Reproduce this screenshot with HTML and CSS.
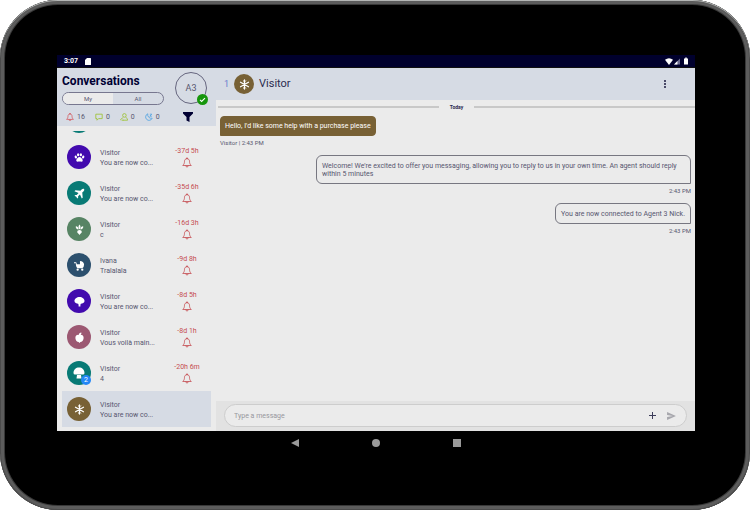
FILE: index.html
```html
<!DOCTYPE html>
<html lang="en">
<head>
<meta charset="utf-8">
<meta name="viewport" content="width=device-width, initial-scale=1">
<title>Conversations</title>
<link rel="stylesheet" href="styles.css">
</head>
<body>
<svg class="defs" aria-hidden="true">
  <symbol id="bell" viewBox="0 0 20 20"><path d="M10 2.200C6.500 2.200 5 5 5 7.500c0 4-1 6-3.500 8.500h17C16 13.500 15 11.500 15 7.500c0-2.500-1.500-5.300-5-5.300zM7.500 16.500a2.500 2.500 0 0 0 5 0M10 .5v1.700" fill="none" stroke="currentColor" stroke-width="1.600" stroke-linejoin="round" stroke-linecap="round"/></symbol>
  <symbol id="flower" viewBox="0 0 24 24"><g stroke="#fff" stroke-width="2.800" stroke-linecap="round" fill="none"><path d="M12 2v20M3.300 7l17.400 10M3.300 17l17.400-10"/><path d="M9.500 4L12 6.500 14.500 4M9.500 20l2.500-2.500 2.500 2.500" stroke-width="2"/></g></symbol>
</svg>
<div class="device">
  <div class="screen">
    <div class="status">
      <span class="clock">3:07</span>
      <svg class="sd" viewBox="0 0 12 14"><path d="M4 0h7q1 0 1 1v12q0 1-1 1H1q-1 0-1-1V4z" fill="#fff"/></svg>
      <span class="grow"></span>
      <svg class="wifi" viewBox="0 0 16 14"><path d="M0 3.500Q8-3 16 3.500L8 14z" fill="#fff"/></svg>
      <svg class="signal" viewBox="0 0 14 14"><path d="M14 0v14H0z" fill="#6c6c91"/><path d="M8 6v8H0z" fill="#fff"/></svg>
      <svg class="battery" viewBox="0 0 8 14"><path d="M2.500 0h3v2H8v12H0V2h2.500z" fill="#fff"/></svg>
    </div>
    <div class="app">
      <aside class="sidebar">
        <header class="side-head">
          <div class="head-main">
            <h1>Conversations</h1>
            <div class="tabs"><button class="on" type="button">My</button><button type="button">All</button></div>
          </div>
          <div class="me">A3
            <svg class="ok" viewBox="0 0 20 20"><circle cx="10" cy="10" r="10" fill="#16960c"/><path d="M5.500 10.500l3 3 6-6" fill="none" stroke="#fff" stroke-width="2"/></svg>
          </div>
          <div class="counts">
            <span class="red"><svg viewBox="0 0 20 20"><use href="#bell"/></svg><b>16</b></span>
            <span class="lime"><svg viewBox="0 0 20 20"><path d="M2 3h16v11H9l-4 4v-4H2z" fill="none" stroke="currentColor" stroke-width="2.200"/></svg><b>0</b></span>
            <span class="lime"><svg viewBox="0 0 20 20"><g fill="none" stroke="currentColor" stroke-width="2.200"><circle cx="11" cy="6" r="4.500"/><path d="M1 18c1-4 4-5 7-6M7 18h12c0-4-2-6-5-7M4 18h5"/></g></svg><b>0</b></span>
            <span class="blue"><svg viewBox="0 0 20 20"><path d="M7 2a8.500 8.500 0 1 0 11 11A9 9 0 0 1 7 2zM12 3h5l-5 5h5" fill="none" stroke="currentColor" stroke-width="2.200"/></svg><b>0</b></span>
          </div>
          <button class="filter" type="button" aria-label="Filter"><svg viewBox="0 0 20 20"><path d="M0 0h20v3l-7 7v10l-6-3v-7L0 3z" fill="#000033"/></svg></button>
        </header>
        <ul class="list">
          <li><span class="avatar teal"></span></li>
          <li><span class="avatar violet"><svg viewBox="0 0 24 24" fill="#fff"><ellipse cx="4" cy="11" rx="2.500" ry="3.300" transform="rotate(-20 4 11)"/><ellipse cx="9" cy="6" rx="2.500" ry="3.500"/><ellipse cx="15" cy="6" rx="2.500" ry="3.500"/><ellipse cx="20" cy="11" rx="2.500" ry="3.300" transform="rotate(20 20 11)"/><path d="M12 11c3 0 7 4.500 7 7.500 0 4-4.500 2-7 2s-7 2-7-2c0-3 4-7.500 7-7.500z"/></svg></span><p>Visitor<br>You are now co...</p><div class="due">-37d 5h<svg><use href="#bell"/></svg></div></li>
          <li><span class="avatar teal"><svg viewBox="0 0 24 24" fill="#fff"><path d="M22 2c-2-1-4 0-6 2l-2 2-11-1-2 2 9 4-4 4H3l-2 2 4 2 2 4 2-2v-3l4-4 4 9 2-2-1-11 2-2c2-2 3-4 2-6z"/></svg></span><p>Visitor<br>You are now co...</p><div class="due">-35d 6h<svg><use href="#bell"/></svg></div></li>
          <li><span class="avatar green"><svg viewBox="0 0 24 24" fill="#fff"><path d="M12 12C9 9 9 4 12 1c3 3 3 8 0 11zM10 12C6 12 3 9 4 5c4 0 6 3 6 7zM14 12c4 0 7-3 6-7-4 0-6 3-6 7z"/><path d="M7 17q0-4 5-4t5 4c0 3-3 4-5 7-2-3-5-4-5-7z"/></svg></span><p>Visitor<br>c</p><div class="due">-16d 3h<svg><use href="#bell"/></svg></div></li>
          <li><span class="avatar navy"><svg viewBox="0 0 24 24" fill="#fff"><path d="M0 5h4q2 0 2 4h7V2c5 0 9 3 9 8q0 6-4 8H8c-3-2-4-6-4-11H0z"/><circle cx="8" cy="21" r="2.500"/><circle cx="18" cy="21" r="2.500"/></svg></span><p>Ivana<br>Tralalala</p><div class="due">-9d 8h<svg><use href="#bell"/></svg></div></li>
          <li><span class="avatar violet"><svg viewBox="0 0 24 24" fill="#fff"><path d="M12 2c6 0 11 4 11 9 0 4-5 6-8 6l-1 2v4h-4v-4l-1-2c-3 0-8-2-8-6 0-5 5-9 11-9z"/></svg></span><p>Visitor<br>You are now co...</p><div class="due">-8d 5h<svg><use href="#bell"/></svg></div></li>
          <li><span class="avatar rose"><svg viewBox="0 0 24 24" fill="#fff"><path d="M12 7c4-2 9 0 9 6 0 5-4 9-7 9l-2 2-2-2c-3 0-7-4-7-9 0-6 5-8 9-6zM11 7C10 3 13 1 16 1c1 4-2 6-5 6z"/></svg></span><p>Visitor<br>Vous voilà main...</p><div class="due">-8d 1h<svg><use href="#bell"/></svg></div></li>
          <li><span class="avatar teal"><svg class="large" viewBox="0 0 24 24" fill="#fff"><path d="M1 12C1 5 6 1 12 1s11 4 11 11q0 3-3 3H4q-3 0-3-3zM8 16h8l1 7H7z"/></svg><em>2</em></span><p>Visitor<br>4</p><div class="due">-20h 6m<svg><use href="#bell"/></svg></div></li>
          <li class="selected"><span class="avatar brown"><svg><use href="#flower"/></svg></span><p>Visitor<br>You are now co...</p></li>
        </ul>
      </aside>
      <main class="chat">
        <header class="chat-head">
          <span class="num">1</span>
          <span class="avatar small brown"><svg><use href="#flower"/></svg></span>
          <h2>Visitor</h2>
          <button class="more" type="button" aria-label="More options"><i></i><i></i><i></i></button>
        </header>
        <section class="log">
          <div class="day">Today</div>
          <div class="msg in">Hello, I'd like some help with a purchase please</div>
          <div class="meta">Visitor | 2:43 PM</div>
          <div class="msg out">Welcome! We're excited to offer you messaging, allowing you to reply to us in your own time. An agent should reply within 5 minutes</div>
          <div class="meta right">2:43 PM</div>
          <div class="msg out">You are now connected to Agent 3 Nick.</div>
          <div class="meta right">2:43 PM</div>
        </section>
        <form class="compose">
          <div class="field">
            <input type="text" placeholder="Type a message" aria-label="Message">
            <button type="button" aria-label="Add"><svg class="plus" viewBox="0 0 14 14"><path d="M7 0v14M0 7h14" stroke="#3c3c5a" stroke-width="2"/></svg></button>
            <button type="button" aria-label="Send"><svg class="send" viewBox="0 0 20 18"><path d="M0 0l20 9L0 18v-7l13-2L0 7z" fill="#a7a7ad"/></svg></button>
          </div>
        </form>
      </main>
    </div>
  </div>
  <nav class="softkeys">
    <button type="button" aria-label="Back"><svg viewBox="0 0 8 8"><path d="M8 0v8L0 4z"/></svg></button>
    <button type="button" aria-label="Home"><svg viewBox="0 0 8 8"><circle cx="4" cy="4" r="4"/></svg></button>
    <button type="button" aria-label="Recent apps"><svg viewBox="0 0 8 8"><path d="M0 0h8v8H0z"/></svg></button>
  </nav>
</div>
</body>
</html>
```
FILE: styles.css
```css
* { box-sizing: border-box; }
body { margin: 0; background: #fff; font-family: Roboto, "Liberation Sans", sans-serif; font-size: 7px; line-height: 10px; color: #56566f; }
button { border: 0; padding: 0; background: none; font: inherit; color: inherit; }
svg { display: block; }
h1, h2, p, ul { margin: 0; padding: 0; }
.defs { position: absolute; width: 0; height: 0; }

.device {
  display: flex;
  flex-direction: column;
  min-height: 100vh;
  padding: 55px 55px 67px 57px;
  border-radius: 58px;
  background: #000;
  box-shadow: inset 0 1px 0 #b4b6b5, inset 0 0 0 1px #4b4b4b, inset 0 0 0 4px #5c5c5c, inset 0 0 0 5px #383838;
}
.screen { flex: 1; display: flex; flex-direction: column; }
.status { display: flex; align-items: center; height: 13px; padding: 0 7px; background: #00002d; border-bottom: 1px solid #111; color: #fff; }
.clock { font-weight: 700; }
.sd { width: 6px; height: 7px; margin-left: 7px; }
.grow { flex: 1; }
.wifi { width: 8px; height: 7px; }
.signal { width: 6px; height: 7px; margin-left: 1px; }
.battery { width: 4px; height: 8px; margin: 0 0 0 4px; }

.app { flex: 1; display: grid; grid-template-columns: 159px 1fr; background: #ebebeb; }
.sidebar { display: flex; flex-direction: column; min-height: 0; }
.side-head {
  display: grid;
  grid-template-columns: 102px 32px;
  justify-content: space-between;
  row-gap: 4px;
  height: 58px;
  padding: 4px 9px 3px 5px;
  background: #d6dbe4;
}
h1 { padding-top: 1px; font-size: 12px; line-height: 16px; color: #000033; }
.tabs { display: flex; height: 13px; margin-top: 3px; border: 1px solid #77778f; border-radius: 7px; overflow: hidden; }
.tabs button { flex: 1; font-size: 6px; line-height: 10px; }
.tabs .on { background: #ebebeb; }
.me { position: relative; width: 32px; height: 32px; border: 1px solid #66667f; border-radius: 50%; font-size: 9px; line-height: 31px; text-align: center; }
.ok { position: absolute; right: -2px; bottom: -2px; width: 11px; height: 11px; }
.counts { display: flex; gap: 10px; align-items: center; padding-left: 4px; }
.counts span { display: flex; align-items: center; gap: 3px; }
.counts svg { width: 8px; height: 8px; }
.counts b { font-weight: 400; color: #56566f; }
.red { color: #d3454b; }
.lime { color: #9fc33b; }
.blue { color: #58a6e2; }
.filter { justify-self: center; align-self: center; margin-right: 6px; }
.filter svg { width: 10px; height: 10px; }

.list { flex: 1 1 0; display: flex; flex-direction: column; justify-content: flex-end; height: 0; margin: 5px 5px 4px; overflow: hidden; list-style: none; }
.list li { flex: none; display: flex; align-items: center; height: 36px; padding-left: 5px; }
.list p { flex: 1; margin-left: 9px; padding-top: 1px; white-space: nowrap; }
.selected { background: #d6dbe4; }
.avatar { position: relative; flex: none; display: flex; align-items: center; justify-content: center; width: 24px; height: 24px; border-radius: 50%; }
.avatar svg { width: 11px; height: 11px; }
.avatar .large { width: 12px; height: 12px; }
.avatar em { position: absolute; right: 0; bottom: 0; width: 10px; height: 10px; border-radius: 50%; background: #2487f5; color: #fff; font-size: 7px; font-style: normal; text-align: center; }
.teal { background: #087a75; }
.violet { background: #420aae; }
.green { background: #578464; }
.navy { background: #2c506e; }
.rose { background: #9c5872; }
.brown { background: #786135; }
.due { width: 48px; color: #c54b50; text-align: center; }
.due svg { width: 10px; height: 11px; margin: 1px auto 0; }

.chat { display: flex; flex-direction: column; min-width: 0; }
.chat-head { display: flex; align-items: center; height: 32px; padding: 0 27px 0 8px; background: #d6dbe4; }
.num { font-size: 9px; color: #6a7dce; }
.small { width: 20px; height: 20px; margin: 0 5px; }
h2 { flex: 1; font-size: 11px; font-weight: 400; line-height: 16px; color: #2b2b50; }
.more { display: grid; gap: 1px; padding: 0 2px; }
.more i { width: 2px; height: 2px; background: #4a4a68; }
.log { flex: 1; display: flex; flex-direction: column; align-items: flex-start; padding: 2px 4px 0; }
.day { display: flex; align-items: center; align-self: stretch; gap: 11px; margin: 0 -4px 4px -2px; font-size: 5px; font-weight: 700; color: #2b2b50; }
.day::before, .day::after { content: ""; flex: 1; height: 2px; background: #c8c8c8; }
.msg { max-width: 375px; padding: 6px 5px 5px; border: 1px solid #777781; font-size: 7px; line-height: 8px; }
.in { padding: 5px 4px; border-color: #786135; border-radius: 4px 4px 4px 0; background: #786135; color: #fff; }
.out { align-self: flex-end; border-radius: 6px 6px 0 6px; }
.meta { margin: 2px 0 7px; font-size: 6px; }
.right { align-self: flex-end; }
.compose { padding: 3px 8px 4px; background: #e2e2e2; }
.field { display: flex; align-items: center; gap: 11px; height: 23px; padding: 0 10px 0 9px; border: 1px solid #cdcdcd; border-radius: 12px; background: #ebebeb; }
input { flex: 1; min-width: 0; padding: 0; border: 0; outline: 0; background: none; font: inherit; }
input::placeholder { color: #97979d; }
.plus { width: 7px; height: 7px; }
.send { width: 9px; height: 8px; }

.softkeys { display: flex; justify-content: center; gap: 73px; height: 12px; padding-top: 8px; }
.softkeys svg { width: 8px; height: 8px; fill: #9a9a9a; }
```
